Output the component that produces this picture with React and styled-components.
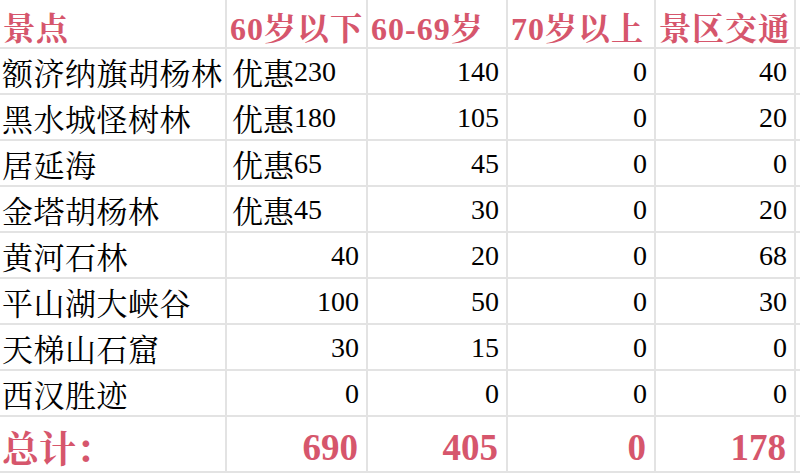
import React from "react";
import styled, { createGlobalStyle } from "styled-components";

const GlobalStyle = createGlobalStyle`
  html, body {
    margin: 0;
    padding: 0;
    background: #ffffff;
  }
`;

const PINK = "#d6566c";
const SERIF = `"Liberation Serif", "Noto Serif CJK SC", "Noto Sans CJK SC", serif`;

const headers = ["景点", "60岁以下", "60-69岁", "70岁以上", "景区交通"];

const rows = [
  { name: "额济纳旗胡杨林", under60: "230", promo: true, mid: 140, over70: 0, traffic: 40 },
  { name: "黑水城怪树林", under60: "180", promo: true, mid: 105, over70: 0, traffic: 20 },
  { name: "居延海", under60: "65", promo: true, mid: 45, over70: 0, traffic: 0 },
  { name: "金塔胡杨林", under60: "45", promo: true, mid: 30, over70: 0, traffic: 20 },
  { name: "黄河石林", under60: "40", mid: 20, over70: 0, traffic: 68 },
  { name: "平山湖大峡谷", under60: "100", mid: 50, over70: 0, traffic: 30 },
  { name: "天梯山石窟", under60: "30", mid: 15, over70: 0, traffic: 0 },
  { name: "西汉胜迹", under60: "0", mid: 0, over70: 0, traffic: 0 },
];

const totals = ["690", "405", "0", "178"];

const App = () => {
  return (
    <>
      <GlobalStyle />
      <Sheet>
        <Grid>
          {headers.map((h) => (
            <HeadCell key={h}>{h}</HeadCell>
          ))}
          <Filler />

          {rows.map((r) => (
            <React.Fragment key={r.name}>
              <NameCell>{r.name}</NameCell>
              {r.promo ? (
                <Cell>
                  <Cjk>优惠</Cjk>
                  {r.under60}
                </Cell>
              ) : (
                <Cell $num>{r.under60}</Cell>
              )}
              <Cell $num>{r.mid}</Cell>
              <Cell $num>{r.over70}</Cell>
              <Cell $num>{r.traffic}</Cell>
              <Filler />
            </React.Fragment>
          ))}

          <TotalLabel>总计：</TotalLabel>
          {totals.map((t, i) => (
            <TotalCell key={i}>{t}</TotalCell>
          ))}
          <Filler />
        </Grid>
      </Sheet>
    </>
  );
};

const Sheet = styled.div`
  width: 800px;
  height: 476px;
  overflow: hidden;
  background: #ffffff;
  font-family: ${SERIF};
`;

const Grid = styled.div`
  display: grid;
  grid-template-columns: 225px 139px 138px 146px 138px 1fr;
  grid-template-rows: 47px repeat(8, 44px) 54px;
  gap: 2px;
  background: #e3e3e3;
  border-bottom: 2px solid #e3e3e3;
`;

const BaseCell = styled.div`
  background: #ffffff;
  display: flex;
  align-items: center;
  white-space: nowrap;
  overflow: hidden;
  color: #000000;
  font-family: ${SERIF};
`;

const HeadCell = styled(BaseCell)`
  color: ${PINK};
  font-weight: bold;
  font-size: 32px;
  letter-spacing: 1px;
  padding: 5px 0 0 3px;
`;

const NameCell = styled(BaseCell)`
  font-size: 31px;
  letter-spacing: 0.5px;
  padding-left: 2px;
`;

const Cell = styled(BaseCell)`
  font-size: 28px;
  justify-content: ${(p) => (p.$num ? "flex-end" : "flex-start")};
  padding: 1px 7px 0 5px;
`;

const Cjk = styled.span`
  font-size: 31px;
`;

const TotalLabel = styled(BaseCell)`
  color: ${PINK};
  font-weight: bold;
  font-size: 37px;
  padding: 6px 0 0 2px;
`;

const TotalCell = styled(BaseCell)`
  color: ${PINK};
  font-weight: bold;
  font-size: 37px;
  justify-content: flex-end;
  padding: 6px 8px 0 0;
`;

const Filler = styled(BaseCell)``;

export default App;
